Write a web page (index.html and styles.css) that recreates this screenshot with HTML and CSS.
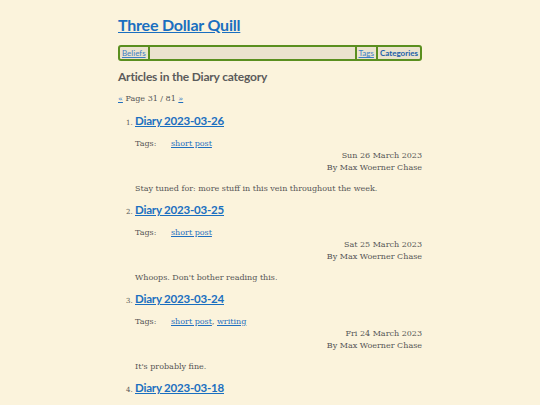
FILE: index.html
```html
<!DOCTYPE html>
<html>
<head>
<meta charset="utf-8">
<link rel="stylesheet" href="styles.css">
</head>
<body>
<div class="page">
  <header class="site-head">
    <h1 class="site-title"><a href="#">Three Dollar Quill</a></h1>
    <nav class="nav">
      <a class="nav-item" href="#">Beliefs</a>
      <span class="nav-spacer"></span>
      <a class="nav-item nav-sep" href="#">Tags</a>
      <a class="nav-item nav-sep nav-current" href="#">Categories</a>
    </nav>
  </header>
  <main>
    <h2 class="cat-title">Articles in the Diary category</h2>
    <p class="pager"><a href="#">«</a> Page 31 / 81 <a href="#">»</a></p>
    <ol class="articles" start="1">
      <li class="article">
        <h3 class="a-title"><a href="#">Diary 2023-03-26</a></h3>
        <div class="tags"><span class="tags-label">Tags:</span><a href="#">short post</a></div>
        <div class="meta">Sun 26 March 2023<br>By Max Woerner Chase</div>
        <p class="summary">Stay tuned for: more stuff in this vein throughout the week.</p>
      </li>
      <li class="article">
        <h3 class="a-title"><a href="#">Diary 2023-03-25</a></h3>
        <div class="tags"><span class="tags-label">Tags:</span><a href="#">short post</a></div>
        <div class="meta">Sat 25 March 2023<br>By Max Woerner Chase</div>
        <p class="summary">Whoops. Don't bother reading this.</p>
      </li>
      <li class="article">
        <h3 class="a-title"><a href="#">Diary 2023-03-24</a></h3>
        <div class="tags"><span class="tags-label">Tags:</span><a href="#">short post</a>, <a href="#">writing</a></div>
        <div class="meta">Fri 24 March 2023<br>By Max Woerner Chase</div>
        <p class="summary">It's probably fine.</p>
      </li>
      <li class="article">
        <h3 class="a-title"><a href="#">Diary 2023-03-18</a></h3>
      </li>
    </ol>
  </main>
</div>
</body>
</html>
```
FILE: styles.css
```css
html, body {
  margin: 0;
  padding: 0;
  background: #fbf3dc;
}
body {
  font-family: "DejaVu Serif", serif;
  color: #555;
  font-size: 8px;
}
a { color: #1f6fbf; }
.page {
  width: 304px;
  margin: 0 auto;
  padding-top: 13px;
}
.site-title {
  margin: 0;
  font-family: Lato, sans-serif;
  font-weight: 700;
  font-size: 16px;
  letter-spacing: -0.2px;
  line-height: 24px;
}
.site-title a { color: #1a6fc0; }
.nav {
  margin-top: 8px;
  display: flex;
  align-items: stretch;
  height: 12px;
  border: 2px solid #5a8f1f;
  border-radius: 3px;
  background: #ebe3ce;
  font-family: Lato, sans-serif;
  font-size: 8px;
  line-height: 12px;
}
.nav-item {
  padding: 0 2px;
  color: #3c7fc4;
}
.nav-item:first-child { border-right: 2px solid #5a8f1f; }
.nav-spacer { flex: 1; }
.nav-sep { border-left: 2px solid #5a8f1f; }
.nav-current { font-weight: 700; color: #1d5fa8; text-decoration: none; }
.cat-title {
  margin: 7px 0 0;
  font-family: Lato, sans-serif;
  font-weight: 700;
  font-size: 12px;
  letter-spacing: -0.2px;
  line-height: 18px;
  color: #5b5b5b;
}
.pager {
  margin: 7px 0 0;
  line-height: 12px;
}
.articles {
  margin: 0;
  padding: 0 0 0 17px;
}
.article {
  font-size: 7px;
}
.a-title {
  margin: 6px 0 0;
  font-family: Lato, sans-serif;
  font-weight: 700;
  font-size: 11.5px;
  letter-spacing: -0.2px;
  line-height: 18px;
  display: inline-block;
}
.article:first-child .a-title { margin-top: 7px; }
.a-title a { color: #1a6fc0; }
.tags {
  font-size: 8px;
  line-height: 12px;
  margin-top: 8px;
}
.tags-label {
  display: inline-block;
  width: 36px;
}
.meta {
  font-size: 8px;
  line-height: 12px;
  text-align: right;
}
.summary {
  font-size: 8px;
  line-height: 12px;
  margin: 9px 0 0;
}
```
